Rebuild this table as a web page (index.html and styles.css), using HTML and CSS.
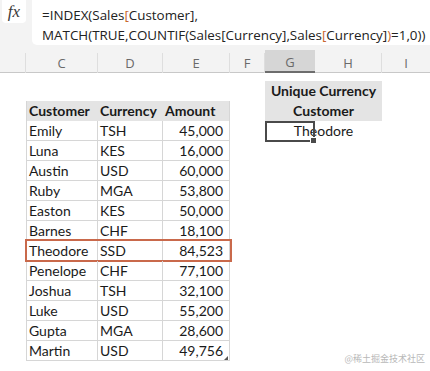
FILE: index.html
```html
<!DOCTYPE html>
<html>
<head>
<meta charset="utf-8">
<link rel="stylesheet" href="styles.css">
</head>
<body>
<div class="app">
  <div class="topbar">
    <div class="formula-row">
      <div class="fx-box"><span class="fx">fx</span></div>
      <div class="formula">
        <div class="fline">=INDEX(Sales<span class="br">[</span>Customer],</div>
        <div class="fline">MATCH(TRUE,COUNTIF(Sales[Currency],Sales<span class="br">[</span>Currency]<span class="br">)</span>=1,0))</div>
      </div>
    </div>
    <div class="colheads">
      <div class="ch corner"></div>
      <div class="ch">C</div>
      <div class="ch">D</div>
      <div class="ch">E</div>
      <div class="ch">F</div>
      <div class="ch sel">G</div>
      <div class="ch">H</div>
      <div class="ch last">I</div>
    </div>
  </div>

  <div class="sheet">
    <div class="gutter"></div>
    <div class="table">
      <div class="row head"><div class="c name">Customer</div><div class="c cur">Currency</div><div class="c amt">Amount</div></div>
      <div class="row"><div class="c name">Emily</div><div class="c cur">TSH</div><div class="c amt num">45,000</div></div>
      <div class="row"><div class="c name">Luna</div><div class="c cur">KES</div><div class="c amt num">16,000</div></div>
      <div class="row"><div class="c name">Austin</div><div class="c cur">USD</div><div class="c amt num">60,000</div></div>
      <div class="row"><div class="c name">Ruby</div><div class="c cur">MGA</div><div class="c amt num">53,800</div></div>
      <div class="row"><div class="c name">Easton</div><div class="c cur">KES</div><div class="c amt num">50,000</div></div>
      <div class="row"><div class="c name">Barnes</div><div class="c cur">CHF</div><div class="c amt num">18,100</div></div>
      <div class="row hl"><div class="c name">Theodore</div><div class="c cur">SSD</div><div class="c amt num">84,523</div><div class="hl-box"></div></div>
      <div class="row"><div class="c name">Penelope</div><div class="c cur">CHF</div><div class="c amt num">77,100</div></div>
      <div class="row"><div class="c name">Joshua</div><div class="c cur">TSH</div><div class="c amt num">32,100</div></div>
      <div class="row"><div class="c name">Luke</div><div class="c cur">USD</div><div class="c amt num">55,200</div></div>
      <div class="row"><div class="c name">Gupta</div><div class="c cur">MGA</div><div class="c amt num">28,600</div></div>
      <div class="row last"><div class="c name">Martin</div><div class="c cur">USD</div><div class="c amt num">49,756<svg class="resize" width="4" height="4" viewBox="0 0 4 4"><path d="M4 0V4H0Z" fill="#555"/></svg></div></div>
    </div>
    <div class="colF"></div>
    <div class="unique">
      <div class="uhead">Unique Currency<br>Customer</div>
      <div class="uval">Theodore<div class="cursor"><span class="handle"></span></div></div>
    </div>
  </div>
  <div class="watermark">@稀土掘金技术社区</div>
</div>
</body>
</html>
```
FILE: styles.css
```css
html, body {
  margin: 0;
  padding: 0;
  background: #ffffff;
}
.app {
  position: relative;
  width: 430px;
  height: 371px;
  overflow: hidden;
  background: #ffffff;
  font-family: "Lato", "Open Sans", sans-serif;
}
.topbar {
  background: #f3f3f3;
  border-bottom: 1px solid #c8c8c8;
}
.formula-row {
  display: flex;
  height: 50px;
  align-items: flex-start;
}
.fx-box {
  width: 24px;
  height: 23px;
  margin-left: 2px;
  background: #ffffff;
  border-radius: 0 0 4px 4px;
  display: flex;
  align-items: center;
  justify-content: center;
}
.fx {
  font-family: "Liberation Serif", serif;
  font-style: italic;
  font-size: 17px;
  color: #3a3a3a;
  line-height: 1;
}
.formula {
  flex: 1;
  margin-left: 6px;
  height: 45px;
  background: #ffffff;
  border-radius: 0 0 0 5px;
  padding: 5px 0 0 10px;
  box-sizing: border-box;
  font-family: "Open Sans", sans-serif;
  font-size: 13.4px;
  color: #222;
}
.fline {
  height: 20px;
  line-height: 20px;
  white-space: nowrap;
}
.br {
  color: #c8662e;
}
.colheads {
  display: grid;
  grid-template-columns: 26px 72px 65px 67px 35px 50px 67px 48px;
  height: 22px;
}
.ch {
  display: flex;
  align-items: center;
  justify-content: center;
  font-family: "Open Sans", sans-serif;
  font-size: 13px;
  color: #6a6a6a;
  border-right: 1px solid #dedede;
  box-sizing: border-box;
  margin: 3px 0 0;
}
.ch.last {
  border-right: none;
}
.ch.sel {
  background: #d6d6d6;
  margin: 0;
  padding-top: 3px;
  border-bottom: 2px solid #6d6d6d;
  border-right: none;
}
.sheet {
  display: flex;
  align-items: flex-start;
  padding-top: 8px;
}
.gutter {
  width: 26px;
  flex: none;
}
.colF {
  width: 35px;
  flex: none;
}
.table {
  width: 204px;
  flex: none;
  margin-top: 20px;
  border-left: 1px solid #d6d6d6;
  border-right: 1px solid #d6d6d6;
  box-sizing: border-box;
}
.row {
  position: relative;
  display: grid;
  grid-template-columns: 71px 65px 66px;
  height: 20px;
  border-bottom: 1px solid #d6d6d6;
  box-sizing: border-box;
  font-size: 14px;
  color: #1a1a1a;
}
.row.head {
  background: #e4e4e4;
  font-weight: 700;
  border-bottom: none;
}
.row.last {
  border-bottom: 1px solid #d6d6d6;
}
.c {
  line-height: 20px;
  padding-left: 2px;
  white-space: nowrap;
  border-right: 1px solid #d6d6d6;
  box-sizing: border-box;
  position: relative;
}
.c.amt {
  border-right: none;
}
.row.head .c {
  border-right: none;
}
.c.num {
  text-align: right;
  padding-right: 6px;
}
.resize {
  position: absolute;
  right: 1px;
  bottom: 1px;
}
.hl-box {
  position: absolute;
  left: -2px;
  right: -3px;
  top: -2px;
  bottom: -2px;
  border: 2px solid #c9694b;
  pointer-events: none;
}
.unique {
  width: 117px;
  flex: none;
}
.uhead {
  height: 40px;
  background: #e4e4e4;
  font-weight: 700;
  font-size: 14px;
  line-height: 20px;
  text-align: center;
  color: #1a1a1a;
}
.uval {
  position: relative;
  height: 20px;
  line-height: 20px;
  font-size: 14px;
  text-align: center;
  color: #1a1a1a;
}
.cursor {
  position: absolute;
  left: 0;
  top: 0;
  width: 50px;
  height: 21px;
  border: 2px solid #4a4a4a;
  box-sizing: border-box;
}
.handle {
  position: absolute;
  right: -4px;
  bottom: -4px;
  width: 5px;
  height: 5px;
  background: #4a4a4a;
  border: 1px solid #ffffff;
}
.watermark {
  position: absolute;
  right: 5px;
  bottom: 6px;
  font-family: "Noto Sans CJK SC", sans-serif;
  font-size: 9px;
  color: #b8b8b8;
}
```
